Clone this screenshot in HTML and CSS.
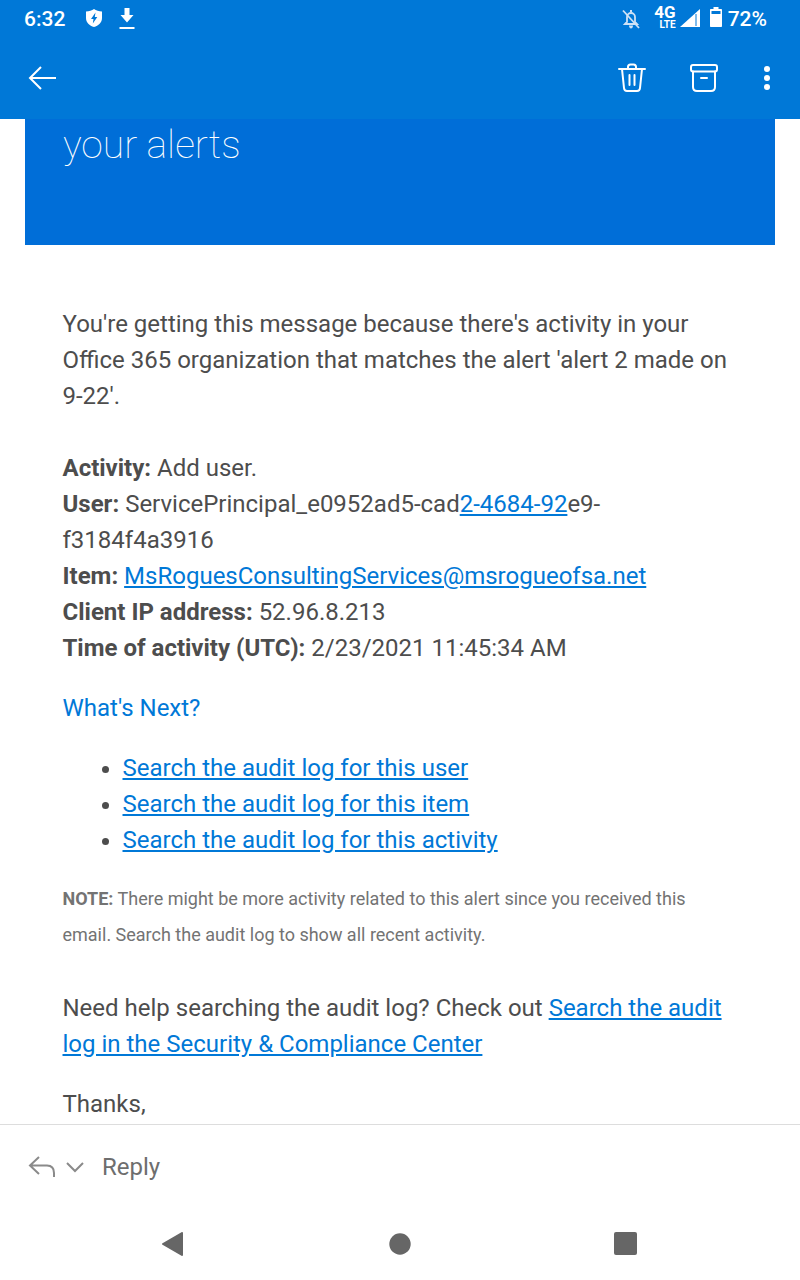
FILE: index.html
```html
<!DOCTYPE html>
<html>
<head>
    <title>Alert message</title>
    <link rel="stylesheet" href="styles.css">
</head>
<body>

    <div class="app-header">
        <div class="status-bar">
            <span class="clock">6:32</span>
            <svg class="status-shield" width="18" height="20" viewBox="0 0 18 20">
                <path fill="#fff" fill-rule="evenodd" d="M9 1 C11 2.300 14 3.300 17 3.500 V10 C17 14.500 13.500 17.800 9 19 C4.500 17.800 1 14.500 1 10 V3.500 C4 3.300 7 2.300 9 1 Z M10.500 4.500 L6 11 H8.500 L7.800 15.500 L12.300 9 H9.800 Z"/>
            </svg>
            <svg class="status-download" width="16" height="22" viewBox="0 0 16 22">
                <path fill="#fff" d="M5.500 0 H10.500 V7 H14.500 L8 14.500 L1.500 7 H5.500 Z"/>
                <rect fill="#fff" x="0.500" y="19" width="15" height="2"/>
            </svg>
            <div class="status-right">
                <svg class="status-bell" width="20" height="22" viewBox="0 0 20 22">
                    <path fill="none" stroke="#cfe2f6" stroke-width="1.800" d="M4 16 L6 14 V9 C6 6.500 8 5 10 5 C12 5 14 6.500 14 9 V14 L16 16 Z"/>
                    <path fill="#cfe2f6" d="M8 17.500 H12 C12 19.500 11 20.500 10 20.500 C9 20.500 8 19.500 8 17.500 Z M9 2 H11 V4 H9 Z"/>
                    <path stroke="#cfe2f6" stroke-width="1.800" d="M2 2.500 L18 20"/>
                </svg>
                <div class="net-type">
                    <span class="net-4g">4G</span>
                    <span class="net-lte">LTE</span>
                </div>
                <svg class="status-signal" width="20" height="18" viewBox="0 0 20 18">
                    <path fill="#fff" d="M0 18 L20 0 V18 Z"/>
                    <path fill="#0078d7" d="M15.500 5 H16.500 V17 H15.500 Z"/>
                </svg>
                <svg class="status-battery" width="12" height="20" viewBox="0 0 12 20">
                    <path fill="#fff" d="M3.500 0 H8.500 V2 H11 C11.600 2 12 2.400 12 3 V19 C12 19.600 11.600 20 11 20 H1 C.4 20 0 19.600 0 19 V3 C0 2.400 .4 2 1 2 H3.500 Z"/>
                    <rect fill="#0078d7" x="1.500" y="4" width="9" height="3"/>
                </svg>
                <span class="battery-pct">72%</span>
            </div>
        </div>
        <div class="toolbar">
            <svg class="back-arrow" width="30" height="26" viewBox="0 0 30 26">
                <path fill="none" stroke="#fff" stroke-width="2" d="M29 13 H3 M14 2 L3 13 L14 24"/>
            </svg>
            <div class="toolbar-actions">
                <svg width="28" height="30" viewBox="0 0 28 30">
                    <g fill="none" stroke="#fff" stroke-width="2" stroke-linecap="round" stroke-linejoin="round">
                        <path d="M1 6 H27 M10 6 V4 C10 2.500 11 1.500 12.500 1.500 H15.500 C17 1.500 18 2.500 18 4 V6"/>
                        <path d="M4 6 L6 25 C6.200 27 7.500 28 9 28 H19 C20.500 28 21.800 27 22 25 L24 6"/>
                        <path d="M11.500 12 V22 M16.500 12 V22"/>
                    </g>
                </svg>
                <svg width="28" height="28" viewBox="0 0 28 28">
                    <g fill="none" stroke="#fff" stroke-width="2" stroke-linecap="round" stroke-linejoin="round">
                        <rect x="1" y="1" width="26" height="6.500" rx="2"/>
                        <path d="M3 7.500 V23 C3 25.500 4.500 27 7 27 H21 C23.500 27 25 25.500 25 23 V7.500"/>
                        <path d="M11 14 H17"/>
                    </g>
                </svg>
                <svg class="kebab" width="6" height="26" viewBox="0 0 6 26">
                    <circle fill="#fff" cx="3" cy="4" r="3"/>
                    <circle fill="#fff" cx="3" cy="13" r="3"/>
                    <circle fill="#fff" cx="3" cy="22" r="3"/>
                </svg>
            </div>
        </div>
    </div>

    <div class="message-scroll">
        <div class="banner">your alerts</div>
        <div class="message-body">
            <p class="intro">You're getting this message because there's activity in your Office 365 organization that matches the alert 'alert 2 made on 9-22'.</p>
            <p class="details">
                <b>Activity:</b> Add user.<br>
                <b>User:</b> ServicePrincipal_e0952ad5-cad<a href="#">2-4684-92</a>e9-f3184f4a3916<br>
                <b>Item:</b> <a href="#">MsRoguesConsultingServices@msrogueofsa.net</a><br>
                <b>Client IP address:</b> 52.96.8.213<br>
                <b>Time of activity (UTC):</b> 2/23/2021 11:45:34 AM
            </p>
            <p class="next-title">What's Next?</p>
            <ul class="next-list">
                <li><a href="#">Search the audit log for this user</a></li>
                <li><a href="#">Search the audit log for this item</a></li>
                <li><a href="#">Search the audit log for this activity</a></li>
            </ul>
            <p class="note"><b>NOTE:</b> There might be more activity related to this alert since you received this email. Search the audit log to show all recent activity.</p>
            <p class="help">Need help searching the audit log? Check out <a href="#">Search the audit log in the Security &amp; Compliance Center</a></p>
            <p class="thanks">Thanks,</p>
        </div>
    </div>

    <div class="reply-bar">
        <svg width="28" height="22" viewBox="0 0 28 22">
            <path fill="none" stroke="#8a8a8a" stroke-width="2" d="M11 1 L2 9.500 L11 18 M2 9.500 H19 C23.500 9.500 26 12.500 26 17 V21"/>
        </svg>
        <svg class="reply-chevron" width="20" height="12" viewBox="0 0 20 12">
            <path fill="none" stroke="#8a8a8a" stroke-width="2" d="M2 2 L10 10 L18 2"/>
        </svg>
        <span class="reply-label">Reply</span>
    </div>

    <div class="nav-bar">
        <svg width="24" height="24" viewBox="0 0 24 24">
            <path fill="#666" stroke="#666" stroke-width="2" stroke-linejoin="round" d="M20 1 V23 L1 12 Z"/>
        </svg>
        <svg width="24" height="24" viewBox="0 0 24 24">
            <circle fill="#666" cx="12" cy="12" r="10.700"/>
        </svg>
        <svg width="24" height="24" viewBox="0 0 24 24">
            <rect fill="#666" x="0" y="0" width="23" height="23" rx="2"/>
        </svg>
    </div>

</body>
</html>
```

FILE: styles.css
```css
body, html {
    height: 100%;
    margin: 0;
    font-family: Roboto, Arial, sans-serif;
    background: #fff;
    overflow: hidden;
}

body {
    display: flex;
    flex-direction: column;
}

a {
    color: #0078d7;
    text-decoration: underline;
}

.app-header {
    background-color: #0078d7;
    height: 119px;
    flex: none;
}

.status-bar {
    height: 38px;
    display: flex;
    align-items: center;
    padding: 0 33px 0 24px;
    color: #fff;
}

.clock {
    font-size: 21px;
    font-weight: 500;
    width: 61px;
    flex: none;
}

.status-shield {
    margin-bottom: 2px;
}

.status-download {
    margin-left: 16px;
}

.status-right {
    margin-left: auto;
    display: flex;
    align-items: center;
}

.status-bell {
    margin-right: 13px;
}

.net-type {
    display: flex;
    flex-direction: column;
    align-items: flex-end;
    font-weight: 700;
    margin-right: 4px;
    margin-bottom: 4px;
}

.net-4g {
    font-size: 17px;
    line-height: 15px;
}

.net-lte {
    font-size: 10px;
    line-height: 9px;
}

.status-signal {
    margin-right: 10px;
    margin-bottom: 2px;
}

.status-battery {
    margin-right: 6px;
    margin-bottom: 4px;
}

.battery-pct {
    font-size: 21px;
    font-weight: 500;
}

.toolbar {
    height: 81px;
    display: flex;
    align-items: flex-start;
    padding: 0 30px 0 27px;
}

.back-arrow {
    margin-top: 27px;
}

.toolbar-actions {
    margin-left: auto;
    display: flex;
    align-items: center;
    gap: 44px;
    margin-top: 25px;
}

.kebab {
    margin-left: 2px;
}

.message-scroll {
    flex: 1;
    overflow: hidden;
}

.banner {
    margin: 0 25px;
    height: 126px;
    background-color: #006ed8;
    color: #fff;
    font-size: 39px;
    font-weight: 100;
    padding-left: 38px;
    line-height: 52px;
}

.message-body {
    padding: 61px 64px 0 62.5px;
    font-size: 24px;
    line-height: 36px;
    color: #4d4d4d;
}

.message-body p {
    margin: 0;
}

.message-body .details {
    margin-top: 36px;
}

.message-body .next-title {
    margin-top: 24px;
    color: #0078d7;
}

.next-list {
    margin: 24px 0 0;
    padding-left: 60px;
}

.message-body .note {
    margin-top: 23px;
    font-size: 18px;
    color: #737373;
}

.message-body .help {
    margin-top: 37px;
}

.message-body .thanks {
    margin-top: 24px;
}

.reply-bar {
    flex: none;
    height: 84px;
    border-top: 1px solid #ddd;
    display: flex;
    align-items: center;
    padding-left: 28px;
    box-sizing: border-box;
    color: #6e6e6e;
}

.reply-chevron {
    margin-left: 9px;
}

.reply-label {
    font-size: 24px;
    margin-left: 17px;
}

.nav-bar {
    flex: none;
    height: 72px;
    display: flex;
    justify-content: center;
    align-items: center;
    gap: 202px;
}
```
